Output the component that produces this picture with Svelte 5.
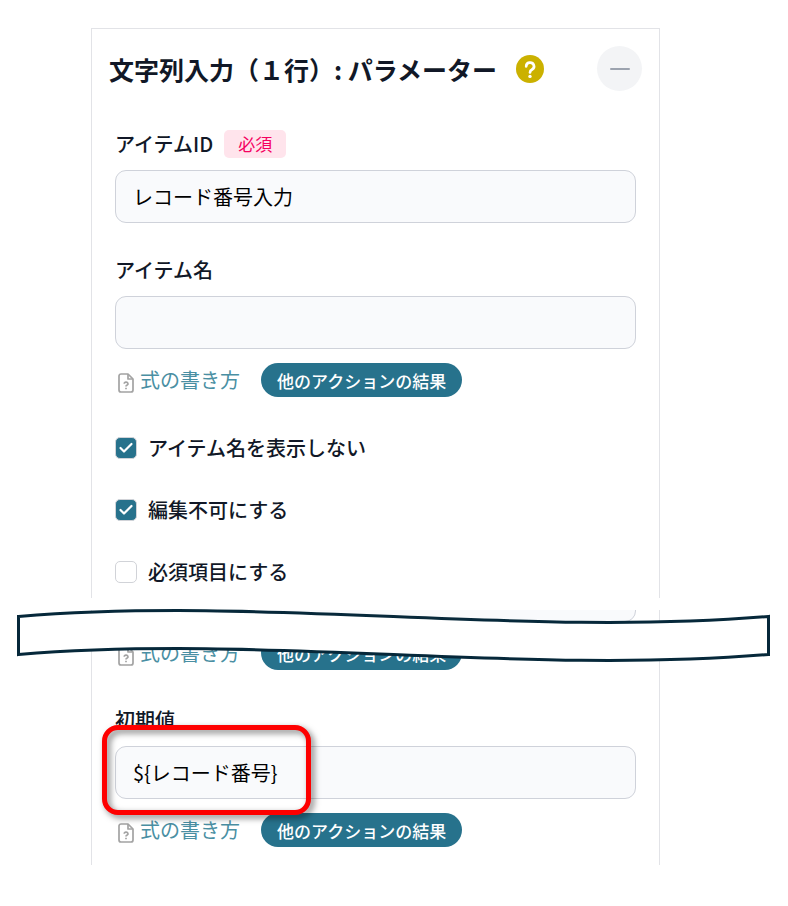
<script>
  let itemId = "レコード番号入力";
  let itemName = "";
  let placeholderText = "";
  let initialValue = "${レコード番号}";

  let options = [
    { id: "hide-name", label: "アイテム名を表示しない", checked: true },
    { id: "readonly", label: "編集不可にする", checked: true },
    { id: "required", label: "必須項目にする", checked: false }
  ];

  let open = true;
  const toggle = () => (open = !open);
</script>

{#snippet tools()}
  <div class="tools">
    <a class="formula" href="#formula">
      <svg class="doc" viewBox="0 0 16 20" aria-hidden="true">
        <path d="M10 1H3a2 2 0 0 0-2 2v14a2 2 0 0 0 2 2h10a2 2 0 0 0 2-2V6z" />
        <path d="M10 1v5h5" />
        <path d="M6.200 10.800a1.900 1.700 0 1 1 2.700 1.500q-.9.500-.9 1.200" />
        <path d="M8 14.800v1.400" />
      </svg>
      式の書き方
    </a>
    <button type="button" class="pill">他のアクションの結果</button>
  </div>
{/snippet}

<main>
  <section class="panel top">
    <header>
      <h1>文字列入力（１行）: パラメーター</h1>
      <button type="button" class="help" aria-label="ヘルプ">
        <svg viewBox="0 0 28 28" aria-hidden="true">
          <circle cx="14" cy="14" r="14" fill="#cbb100" />
          <path
            d="M10.200 11.400a3.900 3.700 0 1 1 5.900 3.100Q14 15.700 14 17.400"
            fill="none"
            stroke="#fff"
            stroke-width="2.700"
            stroke-linecap="round" />
          <circle cx="14" cy="21.400" r="1.700" fill="#fff" />
        </svg>
      </button>
      <button type="button" class="collapse" aria-label="折りたたむ" aria-expanded={open} on:click={toggle}>
        <svg viewBox="0 0 20 4" aria-hidden="true">
          <path d="M1 2h18" stroke="#9ca3af" stroke-width="2" stroke-linecap="round" />
        </svg>
      </button>
    </header>

    <div class="label-row">
      <label for="item-id">アイテムID</label>
      <span class="badge">必須</span>
    </div>
    <input class="text" id="item-id" type="text" bind:value={itemId} />

    <div class="label-row next">
      <label for="item-name">アイテム名</label>
    </div>
    <input class="text" id="item-name" type="text" bind:value={itemName} />
    {@render tools()}

    <div class="options">
      {#each options as option}
        <div class="option">
          <span class="check">
            <input type="checkbox" id={option.id} bind:checked={option.checked} />
            {#if option.checked}
              <svg viewBox="0 0 22 22" aria-hidden="true">
                <path d="M5.500 11l3.500 3.500 7.500-7.500" />
              </svg>
            {/if}
          </span>
          <label for={option.id}>{option.label}</label>
        </div>
      {/each}
    </div>
  </section>

  <!-- omitted part of the form -->
  <div class="tear">
    <svg viewBox="0 0 788 70" aria-hidden="true">
      <path d="M18.500 18.500C268 -2 519 39 768.500 18.500V56.500C519 77 268 36 18.500 56.500z" />
    </svg>
  </div>

  <section class="panel bottom">
    <div class="cut">
      <input class="text" type="text" aria-label="プレースホルダー" bind:value={placeholderText} />
      {@render tools()}
    </div>

    <div class="label-row after-tools">
      <label for="initial">初期値</label>
    </div>
    <div class="field">
      <input class="text" id="initial" type="text" bind:value={initialValue} />
      <div class="marker"></div>
    </div>
    {@render tools()}
  </section>
</main>

<style>
  :global(body) {
    margin: 0;
    background: #fff;
  }

  main {
    padding: 28px 0 40px;
    font-family: "Noto Sans CJK JP", sans-serif;
    color: #111827;
  }

  button {
    border: 0;
    padding: 0;
    font-family: inherit;
    cursor: pointer;
  }

  svg {
    display: block;
  }

  .panel {
    box-sizing: border-box;
    margin: 0 128px 0 91px;
    padding: 0 23px;
    border: 1px solid #e2e3e7;
    border-bottom: 0;
  }

  .top {
    padding-bottom: 12px;
  }

  .bottom {
    border-top: 0;
    padding-bottom: 18px;
    overflow: hidden;
  }

  header {
    display: flex;
    align-items: center;
    margin: 0 -6px 39px;
    padding-top: 17px;
  }

  h1 {
    margin: 0;
    font-size: 25px;
    line-height: 36px;
    font-weight: 700;
    white-space: nowrap;
  }

  .help {
    width: 28px;
    height: 28px;
    margin-left: 19px;
    background: none;
  }

  .collapse {
    display: grid;
    place-items: center;
    width: 45px;
    height: 45px;
    margin-left: auto;
    border-radius: 50%;
    background: #f3f4f6;
  }

  .collapse svg {
    width: 20px;
    height: 4px;
  }

  .label-row {
    display: flex;
    align-items: center;
    gap: 11px;
    height: 28px;
    margin-bottom: 12px;
  }

  .next {
    margin-top: 33px;
  }

  .after-tools {
    margin-top: 36px;
  }

  label {
    font-size: 20px;
    line-height: 28px;
    font-weight: 500;
  }

  .badge {
    padding: 0 14px;
    border-radius: 5px;
    background: #ffe4ec;
    color: #f5005f;
    font-size: 17px;
    line-height: 28px;
  }

  .text {
    display: block;
    box-sizing: border-box;
    width: 100%;
    height: 53px;
    padding: 0 17px;
    border: 1px solid #cfd2da;
    border-radius: 11px;
    background: #f9fafc;
    color: #000;
    font-family: inherit;
    font-size: 20px;
  }

  .tools {
    display: flex;
    align-items: center;
    gap: 21px;
    height: 34px;
    margin-top: 14px;
  }

  .formula {
    display: flex;
    align-items: center;
    gap: 6px;
    padding-left: 3px;
    color: #4a8fa3;
    font-size: 20px;
    line-height: 34px;
    text-decoration: none;
    white-space: nowrap;
  }

  .doc {
    width: 16px;
    height: 20px;
    margin-top: 6px;
    fill: none;
    stroke: #a3a3a3;
    stroke-width: 1.7;
    stroke-linejoin: round;
  }

  .pill {
    height: 34px;
    padding: 0 16px;
    border-radius: 17px;
    background: #27728c;
    color: #fff;
    font-size: 17px;
    font-weight: 500;
    white-space: nowrap;
  }

  .options {
    display: grid;
    gap: 34px;
    margin-top: 37px;
  }

  .option {
    display: flex;
    align-items: center;
    gap: 11px;
  }

  .check {
    display: grid;
  }

  .check input,
  .check svg {
    grid-area: 1 / 1;
    width: 22px;
    height: 22px;
  }

  .check input {
    appearance: none;
    box-sizing: border-box;
    margin: 0;
    border: 1px solid #d1d3d8;
    border-radius: 5px;
    background: #fff;
  }

  .check input:checked {
    background: #27728c;
  }

  .check svg {
    pointer-events: none;
    fill: none;
    stroke: #fff;
    stroke-width: 2.2;
    stroke-linecap: round;
    stroke-linejoin: round;
  }

  .tear {
    position: relative;
    z-index: 1;
    height: 12px;
  }

  .tear svg {
    position: absolute;
    top: 0;
    left: 0;
    width: 100%;
    fill: #fff;
    stroke: #06283a;
    stroke-width: 3;
    pointer-events: none;
  }

  /* only the lower edge of this field is left below the tear */
  .cut {
    margin-top: -41px;
  }

  .field {
    position: relative;
  }

  .marker {
    position: absolute;
    top: -21px;
    left: -13px;
    box-sizing: border-box;
    width: 209px;
    height: 90px;
    border: 5px solid #fe0000;
    border-radius: 16px;
    filter: drop-shadow(3px 3px 3px rgba(0, 0, 0, 0.5));
    pointer-events: none;
  }
</style>
